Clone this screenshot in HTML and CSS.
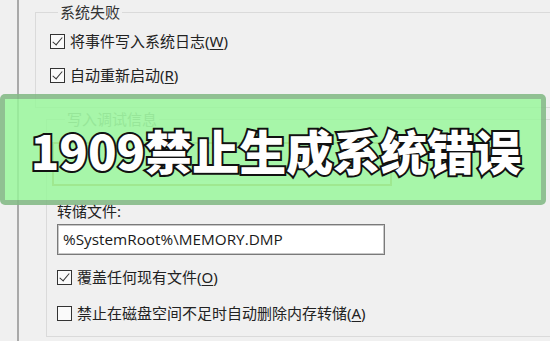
FILE: index.html
```html
<!DOCTYPE html>
<html lang="zh-CN">
<head>
<meta charset="utf-8">
<link rel="stylesheet" href="styles.css">
</head>
<body>
<div class="page">
  <div class="rail"></div>
  <div class="main">
    <section class="group group-fail">
      <div class="group-title">系统失败</div>
      <label class="check check-first"><span class="box checked"></span><span>将事件写入系统日志(<u>W</u>)</span></label>
      <label class="check"><span class="box checked"></span><span>自动重新启动(<u>R</u>)</span></label>
    </section>
    <section class="group group-debug">
      <div class="group-title muted">写入调试信息</div>
      <div class="dropdown"></div>
      <div class="field-label">转储文件:</div>
      <div class="textbox">%SystemRoot%\MEMORY.DMP</div>
      <label class="check check-over"><span class="box checked"></span><span>覆盖任何现有文件(<u>O</u>)</span></label>
      <label class="check check-last"><span class="box"></span><span>禁止在磁盘空间不足时自动删除内存转储(<u>A</u>)</span></label>
    </section>
  </div>
  <div class="banner"><span class="banner-text">1909禁止生成系统错误</span></div>
</div>
</body>
</html>
```

FILE: styles.css
```css
* { box-sizing: border-box; }
html, body { margin: 0; padding: 0; }
body {
  background: #f0f0f0;
  font-family: "Noto Sans", "Noto Sans CJK SC", sans-serif;
  color: #1e1e1e;
}
.page {
  position: relative;
  width: 550px;
  height: 341px;
  overflow: hidden;
  display: flex;
}
.rail {
  width: 19px;
  flex: none;
  border-right: 2px solid #a9a9a9;
}
.main {
  flex: 1;
  padding-left: 16px;
  display: flex;
  flex-direction: column;
}
.group {
  border: 1px solid #dadada;
  border-right: none;
  width: 560px;
}
.group-title {
  display: inline-block;
  background: #f0f0f0;
  font-size: 15px;
  line-height: 18px;
  padding: 0 2px;
  margin-top: -10px;
  margin-left: 8px;
  color: #333;
}
.group-fail {
  margin-top: 12px;
  height: 96px;
  padding-left: 14px;
  display: flex;
  flex-direction: column;
  align-items: flex-start;
}
.check {
  display: flex;
  align-items: center;
  font-size: 15px;
  line-height: 18px;
  gap: 5px;
  color: #222;
}
.check u { text-decoration-thickness: 1px; text-underline-offset: 2px; }
.check-first { margin-top: 11px; }
.group-fail .check + .check { margin-top: 16px; }
.box {
  width: 15px;
  height: 15px;
  border: 1px solid #333;
  background: #fafafa;
  position: relative;
  flex: none;
}
.box.checked::after {
  content: "";
  position: absolute;
  left: 4px;
  top: 0px;
  width: 4px;
  height: 9px;
  border: solid #333;
  border-width: 0 1.6px 1.6px 0;
  transform: rotate(40deg);
}
.group-debug {
  margin-top: 11px;
  margin-left: 11px;
  height: 218px;
  padding-left: 10px;
  display: flex;
  flex-direction: column;
  align-items: flex-start;
}
.muted { color: #9a9a9a; }
.dropdown {
  margin-top: 14px;
  margin-left: -5px;
  width: 340px;
  height: 44px;
  border: 2px solid #c9a86a;
  box-shadow: inset 0 0 0 3px rgba(255, 255, 255, 0.5);
}
.field-label {
  margin-top: 16px;
  font-size: 15px;
  line-height: 18px;
  color: #222;
}
.textbox {
  margin-top: 4px;
  width: 328px;
  height: 31px;
  border: 1px solid #7a7a7a;
  box-shadow: inset 0 0 0 1px #c8c8c8;
  background: #fff;
  font-family: "Open Sans", "Noto Sans", sans-serif;
  font-size: 15.3px;
  line-height: 29px;
  padding-left: 5px;
  color: #1a1a1a;
}
.check-over { margin-top: 13px; }
.check-last { margin-top: 18px; }
.banner {
  position: absolute;
  left: 0;
  top: 94px;
  width: 546px;
  height: 111px;
  border: 5px solid rgba(110, 110, 110, 0.4);
  border-radius: 5px;
  background: rgba(150, 246, 152, 0.82);
  display: flex;
  align-items: center;
  justify-content: center;
}
.banner-text {
  font-family: "Noto Sans CJK SC", sans-serif;
  font-weight: 900;
  font-size: 47px;
  line-height: 0.88;
  color: #fff;
  -webkit-text-stroke: 4px #111;
  paint-order: stroke fill;
  white-space: nowrap;
  padding-left: 6px;
}
```
